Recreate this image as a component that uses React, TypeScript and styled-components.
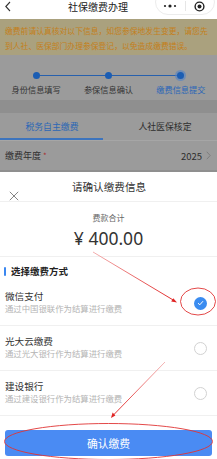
import React from "react";
import styled, { createGlobalStyle } from "styled-components";

const Global = createGlobalStyle`
  html, body { margin: 0; padding: 0; }
  body {
    width: 217px;
    height: 459px;
    overflow: hidden;
    font-family: "Noto Sans CJK SC", "Noto Sans", sans-serif;
    background: #8f8f8f;
  }
  * { box-sizing: border-box; }
`;

const Screen = styled.div`
  position: relative;
  width: 217px;
  height: 459px;
  overflow: hidden;
  display: flex;
  flex-direction: column;
  background: #8f8f8f;
`;

const NavBar = styled.div`
  height: 19px;
  background: #fff;
  display: flex;
  align-items: flex-start;
  position: relative;
  flex-shrink: 0;
`;

const BackBtn = styled.div`
  width: 24px;
  height: 13px;
  display: flex;
  align-items: center;
  padding-left: 4px;
`;

const NavTitle = styled.div`
  flex: 1;
  text-align: center;
  font-size: 10px;
  line-height: 13px;
  color: #222;
  padding-left: 17px;
`;

const Capsule = styled.div`
  width: 60px;
  height: 26px;
  margin-top: -11px;
  margin-right: 2px;
  border: 1px solid #ececec;
  border-radius: 13px;
  display: flex;
  align-items: flex-end;
  padding-bottom: 3px;
`;

const CapsuleHalf = styled.div<{ $border?: boolean }>`
  flex: 1;
  height: 10px;
  display: flex;
  align-items: center;
  justify-content: center;
  border-left: ${(p) => (p.$border ? "1px solid #e6e6e6" : "none")};
`;

const Notice = styled.div`
  background: #aaa17e;
  color: #c47f1a;
  font-size: 7.8px;
  line-height: 15px;
  padding: 4px 4px 2px 5px;
  height: 36px;
  letter-spacing: 0;
  flex-shrink: 0;
`;

const Steps = styled.div`
  height: 45px;
  background: #9b9b9b;
  display: grid;
  grid-template-columns: repeat(3, 1fr);
  position: relative;
  flex-shrink: 0;
`;

const StepLine = styled.div`
  position: absolute;
  left: 36px;
  right: 38px;
  top: 20px;
  height: 1px;
  background: #2760ad;
`;

const Step = styled.div`
  display: flex;
  flex-direction: column;
  align-items: center;
  position: relative;
`;

const DotWrap = styled.div`
  height: 41px;
  display: flex;
  align-items: flex-start;
  justify-content: center;
  padding-top: 17px;
`;

const Dot = styled.div<{ $current?: boolean }>`
  width: 7px;
  height: 7px;
  border-radius: 50%;
  background: #1b5db3;
  box-shadow: ${(p) => (p.$current ? "0 0 0 2px rgba(80,130,200,0.6)" : "none")};
`;

const StepLabel = styled.div<{ $current?: boolean }>`
  position: absolute;
  top: 28px;
  font-size: 8.2px;
  line-height: 12px;
  color: ${(p) => (p.$current ? "#2a66b8" : "#333")};
  white-space: nowrap;
`;

const Gap = styled.div<{ $h: number }>`
  height: ${(p) => p.$h}px;
  flex-shrink: 0;
`;

const Tabs = styled.div`
  height: 28px;
  background: #9b9b9b;
  display: flex;
  border-bottom: 1px solid #a6a6a6;
  flex-shrink: 0;
`;

const Tab = styled.div<{ $active?: boolean }>`
  flex: 1;
  display: flex;
  align-items: center;
  justify-content: center;
  font-size: 8.9px;
  color: ${(p) => (p.$active ? "#2d68b5" : "#2e2e2e")};
  position: relative;
  padding-left: ${(p) => (p.$active ? "0" : "4px")};
  padding-right: ${(p) => (p.$active ? "5px" : "0")};
  &::after {
    content: "";
    display: ${(p) => (p.$active ? "block" : "none")};
    position: absolute;
    left: 0;
    right: 6px;
    bottom: 0;
    height: 2px;
    background: #3d74bd;
  }
`;

const FieldRow = styled.div`
  height: 29px;
  background: #9b9b9b;
  display: flex;
  align-items: center;
  padding: 0 6px 0 5px;
  font-size: 9px;
  color: #2e2e2e;
  flex-shrink: 0;
`;

const FieldLabel = styled.div`
  flex: 1;
  display: flex;
  align-items: center;
  gap: 2px;
`;

const Star = styled.span`
  color: #a83232;
  font-size: 8px;
`;

const FieldValue = styled.div`
  display: flex;
  align-items: center;
  gap: 4px;
  font-size: 9.5px;
  color: #2e2e2e;
`;

const Sheet = styled.div`
  position: absolute;
  left: 0;
  right: 0;
  top: 172px;
  bottom: 0;
  background: #fff;
  display: flex;
  flex-direction: column;
`;

const SheetHeader = styled.div`
  height: 30px;
  border-bottom: 1px solid #f0f0f0;
  display: flex;
  align-items: center;
  position: relative;
`;

const CloseBtn = styled.div`
  position: absolute;
  left: 9px;
  top: 10px;
  width: 10px;
  height: 10px;
`;

const SheetTitle = styled.div`
  flex: 1;
  text-align: center;
  font-size: 10.6px;
  color: #333;
  padding-left: 1px;
`;

const AmountBlock = styled.div`
  padding: 10px 0 6px;
  border-bottom: 1px solid #f0f0f0;
  display: flex;
  flex-direction: column;
  align-items: center;
`;

const AmountLabel = styled.div`
  font-size: 8px;
  line-height: 12px;
  color: #666;
`;

const AmountValue = styled.div`
  font-family: "Noto Sans", "Noto Sans CJK SC", sans-serif;
  font-size: 17.5px;
  line-height: 24px;
  color: #333;
  margin-top: 2px;
`;

const SectionHeader = styled.div`
  display: flex;
  align-items: center;
  padding: 8px 0 4px 4px;
  gap: 5px;
`;

const SectionBar = styled.div`
  width: 2px;
  height: 9px;
  background: #3b87f0;
  border-radius: 1px;
`;

const SectionTitle = styled.div`
  font-size: 9.5px;
  line-height: 12px;
  font-weight: 700;
  color: #222;
`;

const Option = styled.div`
  display: flex;
  align-items: center;
  padding: 9px 10px 11px 5px;
  border-bottom: 1px solid #f0f0f0;
`;

const OptionText = styled.div`
  flex: 1;
  display: flex;
  flex-direction: column;
`;

const OptionTitle = styled.div`
  font-size: 9.6px;
  line-height: 12px;
  color: #333;
`;

const OptionSub = styled.div`
  font-size: 8.4px;
  line-height: 12px;
  color: #b4b4b4;
`;

const Radio = styled.div<{ $checked?: boolean }>`
  width: 13px;
  height: 13px;
  border-radius: 50%;
  margin-top: 2px;
  background: ${(p) => (p.$checked ? "#3a8cf0" : "#fff")};
  border: ${(p) => (p.$checked ? "none" : "1px solid #d2d2d2")};
  display: flex;
  align-items: center;
  justify-content: center;
`;

const ButtonArea = styled.div`
  padding: 14px 5px 0 5px;
`;

const ConfirmButton = styled.div`
  height: 26px;
  background: #4a8bf3;
  border-radius: 3px;
  color: #fff;
  font-size: 10.8px;
  display: flex;
  align-items: center;
  justify-content: center;
`;

const Annotations = styled.svg`
  position: absolute;
  left: 0;
  top: 0;
  width: 217px;
  height: 459px;
  pointer-events: none;
`;

const options = [
  { title: "微信支付", sub: "通过中国银联作为结算进行缴费", checked: true },
  { title: "光大云缴费", sub: "通过光大银行作为结算进行缴费", checked: false },
  { title: "建设银行", sub: "通过建设银行作为结算进行缴费", checked: false },
];

const steps = ["身份信息填写", "参保信息确认", "缴费信息提交"];

export default function App() {
  return (
    <>
      <Global />
      <Screen>
        <NavBar>
          <BackBtn>
            <svg width="8" height="11" viewBox="0 0 8 11">
              <path d="M6 1 L1.8 5.5 L6 10" fill="none" stroke="#333" strokeWidth="1.1" />
            </svg>
          </BackBtn>
          <NavTitle>社保缴费办理</NavTitle>
          <Capsule>
            <CapsuleHalf>
              <svg width="14" height="4" viewBox="0 0 14 4">
                <circle cx="2" cy="2" r="1.1" fill="#222" />
                <circle cx="7" cy="2" r="1.6" fill="#222" />
                <circle cx="12" cy="2" r="1.1" fill="#222" />
              </svg>
            </CapsuleHalf>
            <CapsuleHalf $border>
              <svg width="11" height="11" viewBox="0 0 11 11">
                <circle cx="5.5" cy="5.5" r="4.4" fill="none" stroke="#222" strokeWidth="1.4" />
                <circle cx="5.5" cy="5.5" r="2" fill="#222" />
              </svg>
            </CapsuleHalf>
          </Capsule>
        </NavBar>

        <Notice>
          缴费前请认真核对以下信息，如您参保地发生变更，请您先到人社、医保部门办理参保登记，以免造成缴费错误。
        </Notice>

        <Steps>
          <StepLine />
          {steps.map((s, i) => (
            <Step key={s}>
              <DotWrap>
                <Dot $current={i === 2} />
              </DotWrap>
              <StepLabel $current={i === 2}>{s}</StepLabel>
            </Step>
          ))}
        </Steps>

        <Gap $h={13} />

        <Tabs>
          <Tab $active>税务自主缴费</Tab>
          <Tab>人社医保核定</Tab>
        </Tabs>

        <FieldRow>
          <FieldLabel>
            缴费年度<Star>*</Star>
          </FieldLabel>
          <FieldValue>
            2025
            <svg width="5" height="9" viewBox="0 0 5 9">
              <path d="M0.8 0.8 L4.2 4.5 L0.8 8.2" fill="none" stroke="#7a7a7a" strokeWidth="0.9" />
            </svg>
          </FieldValue>
        </FieldRow>

        <Sheet>
          <SheetHeader>
            <CloseBtn>
              <svg width="10" height="10" viewBox="0 0 10 10">
                <path d="M0.8 0.8 L9.2 9.2 M9.2 0.8 L0.8 9.2" stroke="#777" strokeWidth="0.9" />
              </svg>
            </CloseBtn>
            <SheetTitle>请确认缴费信息</SheetTitle>
          </SheetHeader>

          <AmountBlock>
            <AmountLabel>费款合计</AmountLabel>
            <AmountValue>¥ 400.00</AmountValue>
          </AmountBlock>

          <SectionHeader>
            <SectionBar />
            <SectionTitle>选择缴费方式</SectionTitle>
          </SectionHeader>

          {options.map((o) => (
            <Option key={o.title}>
              <OptionText>
                <OptionTitle>{o.title}</OptionTitle>
                <OptionSub>{o.sub}</OptionSub>
              </OptionText>
              <Radio $checked={o.checked}>
                {o.checked && (
                  <svg width="7" height="6" viewBox="0 0 7 6">
                    <path d="M1 3.2 L2.8 4.8 L6 1.2" fill="none" stroke="#fff" strokeWidth="1" />
                  </svg>
                )}
              </Radio>
            </Option>
          ))}

          <ButtonArea>
            <ConfirmButton>确认缴费</ConfirmButton>
          </ButtonArea>
        </Sheet>

        <Annotations viewBox="0 0 217 459">
          <defs>
            <linearGradient id="g1" x1="93" y1="252" x2="176" y2="302" gradientUnits="userSpaceOnUse">
              <stop offset="0" stopColor="#f3b0b0" />
              <stop offset="1" stopColor="#e02424" />
            </linearGradient>
            <linearGradient id="g2" x1="165" y1="362" x2="111" y2="418" gradientUnits="userSpaceOnUse">
              <stop offset="0" stopColor="#f4b8b8" />
              <stop offset="1" stopColor="#e02424" />
            </linearGradient>
          </defs>
          <ellipse cx="198" cy="301.5" rx="17.5" ry="13.5" fill="none" stroke="#e03434" strokeWidth="0.9" />
          <line x1="93" y1="252" x2="174" y2="300.5" stroke="url(#g1)" strokeWidth="1" />
          <path d="M177 302.5 L171.2 301.6 L173.3 298.2 Z" fill="#e02424" />
          <line x1="165" y1="362" x2="112.5" y2="416" stroke="url(#g2)" strokeWidth="1" />
          <path d="M111 418 L112.6 412.6 L115.4 415.4 Z" fill="#e02424" />
          <ellipse cx="108.5" cy="441.5" rx="104" ry="18" fill="none" stroke="#e03434" strokeWidth="0.9" />
        </Annotations>
      </Screen>
    </>
  );
}
